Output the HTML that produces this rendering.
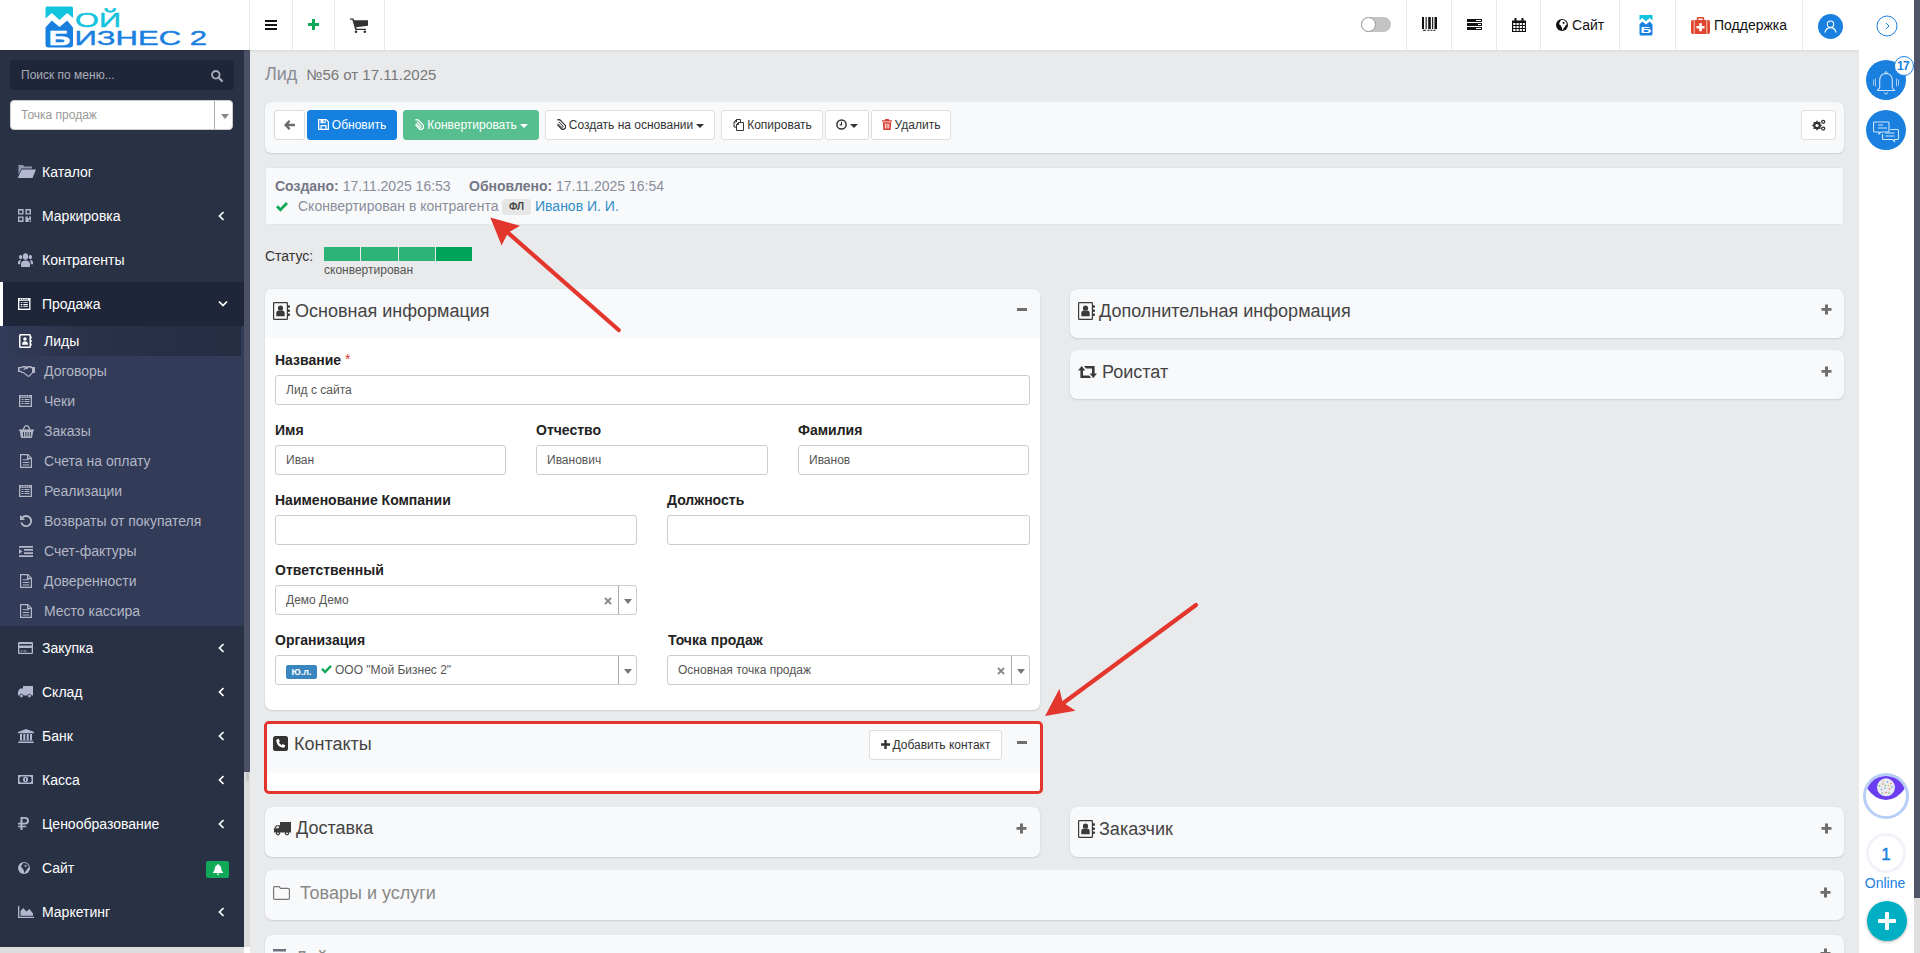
<!DOCTYPE html>
<html lang="ru">
<head>
<meta charset="utf-8">
<title>Лид №56 от 17.11.2025</title>
<style>
*{box-sizing:border-box;margin:0;padding:0}
html,body{width:1920px;height:953px;overflow:hidden}
body{font-family:"Liberation Sans",Arial,sans-serif;font-size:14px;color:#333;background:#e9eaec;position:relative}
.abs{position:absolute}
svg{display:block}
/* ---------- top bar ---------- */
#topbar{position:absolute;left:0;top:0;width:1859px;height:50px;background:#fff;box-shadow:0 1px 2px rgba(0,0,0,.08);z-index:5}
.tsep{position:absolute;top:0;width:1px;height:50px;background:#e9e9eb}
/* ---------- sidebar ---------- */
#sidebar{position:absolute;left:0;top:50px;width:244px;height:897px;background:#293145;overflow:hidden;z-index:4}
#sbtrack{position:absolute;left:244px;top:50px;width:6px;height:897px;background:#dcdcdc;z-index:4}
#sbthumb{position:absolute;left:244px;top:50px;width:6px;height:722px;background:#4b5066;z-index:4}
#sbcorner{position:absolute;left:244px;top:947px;width:6px;height:6px;background:#fff;z-index:4}
#sbmini{position:absolute;left:246px;top:772px;width:3px;height:9px;background:#c6c6c6;border-radius:0 0 2px 2px;z-index:4}
#sbbottom{position:absolute;left:0;top:947px;width:244px;height:6px;background:#dddddd;z-index:4}

/* sidebar content */
#sidebar .search{position:absolute;left:10px;top:10px;width:224px;height:30px;background:#20263a;border-radius:3px;color:#a9acb6;font-size:12px;line-height:30px;padding-left:11px}
#sidebar .sel{position:absolute;left:10px;top:50px;width:223px;height:30px;background:#fff;border-radius:4px;border:1px solid #ccc;color:#999;font-size:12px;line-height:28px;padding-left:10px}
#sidebar .sel i{position:absolute;left:203px;top:0;width:1px;height:28px;background:#aaa}
#sidebar .sel b{position:absolute;left:210px;top:13px;width:0;height:0;border-left:4px solid transparent;border-right:4px solid transparent;border-top:5px solid #888}
.mi{position:absolute;left:0;width:244px;height:44px;color:#fff;font-size:14px;line-height:44px;padding-left:42px;white-space:nowrap}
.mi.act{background:#20263a;border-left:3px solid #fff;padding-left:39px}
.mi svg{position:absolute}
.mi .chev{position:absolute;left:218px;top:17px}
.mi.act .chev{left:215px}
#submenu{position:absolute;left:0;top:276px;width:244px;height:300px;background:#323b58}
.si{position:absolute;left:0;width:241px;height:30px;color:#b3b7c6;font-size:14px;line-height:30px;padding-left:44px;white-space:nowrap}
.si.act{color:#fff;background:linear-gradient(90deg,#323b58 0,#2a3047 40%,#262c42 100%)}
.si svg{position:absolute;left:19px}
/* ---------- right rail ---------- */
#rail{position:absolute;left:1859px;top:0;width:55px;height:953px;background:#fff;z-index:6}
#vtrack{position:absolute;left:1914px;top:0;width:6px;height:953px;background:#e0e0e0;z-index:6}
#vthumb{position:absolute;left:1914px;top:0;width:6px;height:898px;background:#4f5468;z-index:6}
/* ---------- main ---------- */
.panel{position:absolute;background:#f8f9fb;border-radius:6px;box-shadow:0 1px 2px rgba(0,0,0,.11),0 0 1px rgba(0,0,0,.10)}

/* main content */
.btn{position:absolute;top:8px;height:30px;border-radius:3px;border:1px solid #ddd;background:#fff;color:#333;font-size:12px;line-height:28px;white-space:nowrap;text-align:center}
.btn svg{display:inline-block;vertical-align:middle;position:relative;top:-1px}
.btn.blue{background:#1580e0;border-color:#1580e0;color:#fff}
.btn.green{background:#57bf8f;border-color:#57bf8f;color:#fff}
.caret{display:inline-block;width:0;height:0;border-left:4px solid transparent;border-right:4px solid transparent;border-top:4px solid #333;vertical-align:middle;margin-left:3px}
.card{position:absolute;background:#fff;border-radius:7px;box-shadow:0 1px 2px rgba(0,0,0,.11),0 0 1px rgba(0,0,0,.10);overflow:hidden}
.card .hd{position:absolute;left:0;top:0;right:0;background:#f8f9fb}
.card .tt{position:absolute;font-size:18px;line-height:22px;color:#444;white-space:nowrap}
.card svg.ic{position:absolute}
.pm{position:absolute;background:#6e6e6e;border-radius:.5px}
.lbl{position:absolute;font-weight:bold;font-size:14px;line-height:16px;color:#222;white-space:nowrap}
.inp{position:absolute;height:30px;border:1px solid #ccc;border-radius:3px;background:#fff;font-size:12px;line-height:28px;color:#555;padding-left:10px;white-space:nowrap}
.inp .dv{position:absolute;right:17px;top:0;width:1px;height:28px;background:#aaa}
.inp .ar{position:absolute;right:4px;top:13px;width:0;height:0;border-left:4px solid transparent;border-right:4px solid transparent;border-top:5px solid #777}
.inp .x{position:absolute;right:24px;top:11px}
</style>
</head>
<body>

<div id="topbar">
<!-- logo -->
<svg class="abs" style="left:40px;top:2px" width="175" height="48" viewBox="0 0 175 48">
  <path d="M7 4.5h24.5a1.5 1.5 0 0 1 1.500 1.500V16l-5.800-5-7.700 7-7.700-7L5.500 16.500V6A1.500 1.500 0 0 1 7 4.500z" fill="#12c3de"/>
  <path d="M5.500 25.500l6.300-7 7.700 6.500 7.700-6.500 5.800 7V42.500a3 3 0 0 1-3 3H8.500a3 3 0 0 1-3-3z" fill="#1a80e0"/>
  <text x="8.800" y="42.600" font-family="Liberation Sans, sans-serif" font-weight="bold" font-size="19.600" fill="#fff" stroke="#fff" stroke-width=".5" textLength="21.500" lengthAdjust="spacingAndGlyphs">Б</text>
  <text x="35" y="25.300" font-family="Liberation Sans, sans-serif" font-size="19.600" fill="#12c3de" stroke="#12c3de" stroke-width=".4" textLength="46" lengthAdjust="spacingAndGlyphs">ОЙ</text>
  <text x="34.500" y="42.900" font-family="Liberation Sans, sans-serif" font-size="20.400" fill="#1a80e0" stroke="#1a80e0" stroke-width=".4" textLength="132.500" lengthAdjust="spacingAndGlyphs">ИЗНЕС 2</text>
</svg>
<div class="tsep" style="left:249px"></div>
<div class="tsep" style="left:292px"></div>
<div class="tsep" style="left:334px"></div>
<div class="tsep" style="left:384px"></div>
<!-- hamburger -->
<svg class="abs" style="left:265px;top:20px" width="12" height="10" viewBox="0 0 12 10"><path d="M0 0h12v2H0zM0 4h12v2H0zM0 8h12v2H0z" fill="#111"/></svg>
<!-- plus -->
<svg class="abs" style="left:308px;top:19px" width="11" height="11" viewBox="0 0 11 11"><path d="M4 0h3v4h4v3H7v4H4V7H0V4h4z" fill="#0fa958"/></svg>
<!-- cart -->
<svg class="abs" style="left:350px;top:18px" width="18" height="15" viewBox="0 0 18 15"><path d="M0 .4h3.300l.9 1.800H18v5.600L6.300 9.300l.4 1.500H16v1.300H5.300L2.300 1.700H0z" fill="#333"/><circle cx="6" cy="13.700" r="1.300" fill="#333"/><circle cx="14.800" cy="13.700" r="1.300" fill="#333"/></svg>
<!-- toggle -->
<div class="abs" style="left:1361px;top:17px;width:30px;height:15px;border-radius:8px;background:#c4c4c4"></div>
<div class="abs" style="left:1361px;top:17px;width:15px;height:15px;border-radius:50%;background:#fff;border:1px solid #9a9a9a"></div>
<div class="tsep" style="left:1406px"></div>
<div class="tsep" style="left:1451px"></div>
<div class="tsep" style="left:1496px"></div>
<div class="tsep" style="left:1540px"></div>
<div class="tsep" style="left:1619px"></div>
<div class="tsep" style="left:1675px"></div>
<div class="tsep" style="left:1802px"></div>
<!-- barcode -->
<svg class="abs" style="left:1422px;top:17px" width="15" height="14" viewBox="0 0 15 14"><path d="M0 0h2v12H0zM3.600 0h1.100v12H3.600zM6.200 0h2.600v12H6.200zM10.100 0h1.100v12h-1.100zM12.500 0H15v12h-2.500z" fill="#111"/><path d="M1 12.800h3v.9H1zM5.500 12.800h2v.9h-2zM8.500 12.800h2v.9h-2zM11.500 12.800h2v.9h-2z" fill="#111"/></svg>
<!-- server -->
<svg class="abs" style="left:1467px;top:19px" width="15" height="11" viewBox="0 0 15 11"><path d="M0 0h15v3H0zM0 4h15v3H0zM0 8h15v3H0z" fill="#111"/><path d="M9 1h5v1H9zM11 5h3v1h-3zM9 9h5v1H9z" fill="#fff"/></svg>
<!-- calendar -->
<svg class="abs" style="left:1512px;top:18px" width="14" height="14" viewBox="0 0 14 14"><path d="M0 2.500h14V14H0z" fill="#111"/><path d="M2.500 0h2v4h-2zM9.500 0h2v4h-2z" fill="#111"/><path d="M1.200 5h2.300v2H1.200zM4.500 5h2.200v2H4.500zM7.700 5h2.200v2H7.700zM10.900 5h2v2h-2zM1.200 8h2.300v2H1.200zM4.500 8h2.200v2H4.500zM7.700 8h2.200v2H7.700zM10.900 8h2v2h-2zM1.200 11h2.300v2H1.200zM4.500 11h2.200v2H4.500zM7.700 11h2.200v2H7.700zM10.900 11h2v2h-2z" fill="#fff"/></svg>
<!-- globe + Сайт -->
<svg class="abs" style="left:1556px;top:19px" width="12" height="12" viewBox="0 0 12 12"><circle cx="6" cy="6" r="6" fill="#111"/><path d="M5.200 1.100L7.300 .9l1.900 1 1.300 1.800.3 2-1 .4-.9 1.700-1.300 1.400-.8 1.700-.7-.3-.1-2.100-.9-.7-.2-1.300-1.300-.7-.4-1.300.6-1.600z" fill="#fff"/><path d="M6.800 2.800l1.600.4.300 1.200-1.300.5-.9-.9z" fill="#111"/></svg>
<div class="abs" style="left:1572px;top:17px;font-size:14px;line-height:16px;color:#111">Сайт</div>
<!-- mini logo -->
<svg class="abs" style="left:1639px;top:15px" width="14" height="21" viewBox="0 0 14 21"><path d="M.5 0h13v5.500L10.800 3 7 6.200 3.200 3 .5 5.500z" fill="#12c3de"/><path d="M.5 9.500L3.200 6.500 7 9.500l3.800-3 2.700 3V19a1.500 1.500 0 0 1-1.500 1.500H2A1.500 1.500 0 0 1 .5 19z" fill="#1a80e0"/><text x="1.600" y="17.700" font-family="Liberation Sans, sans-serif" font-weight="bold" font-size="8.600" fill="#fff" textLength="10.800" lengthAdjust="spacingAndGlyphs">Б</text></svg>
<!-- medkit + Поддержка -->
<svg class="abs" style="left:1691px;top:17px" width="19" height="17" viewBox="0 0 19 17"><path d="M5.800 3.200V1.300Q5.800 0 7.100 0h4.800q1.300 0 1.300 1.300v1.900h-1.500V1.500H7.300v1.700z" fill="#e0452f"/><path d="M1.800 3h1v14h-1Q0 17 0 15.200V4.800Q0 3 1.800 3zM16.200 3h1Q19 3 19 4.800v10.400Q19 17 17.200 17h-1z" fill="#e0452f"/><rect x="3.500" y="3" width="12" height="14" fill="#e0452f"/><path d="M8.200 6.300h2.600V9h2.700v2.600h-2.700v2.700H8.200v-2.700H5.500V9h2.700z" fill="#fff"/></svg>
<div class="abs" style="left:1714px;top:17px;font-size:14px;line-height:16px;color:#111">Поддержка</div>
<!-- avatar -->
<div class="abs" style="left:1818px;top:14px;width:25px;height:25px;border-radius:50%;background:#1a80e0"></div>
<svg class="abs" style="left:1824px;top:20px" width="13" height="13" viewBox="0 0 13 13"><circle cx="6.500" cy="4.200" r="3.200" fill="none" stroke="#fff" stroke-width="1.100"/><path d="M.8 12.500C1.800 9 4 7.600 6.500 7.600S11.200 9 12.200 12.500" fill="none" stroke="#fff" stroke-width="1.100"/></svg>
</div>
<div id="sidebar">
<div class="search">Поиск по меню...<svg class="abs" style="left:201px;top:10px" width="12" height="12" viewBox="0 0 12 12"><circle cx="4.800" cy="4.800" r="3.800" fill="none" stroke="#a9acb6" stroke-width="1.800"/><path d="M7.500 7.500L11 11" stroke="#a9acb6" stroke-width="2.200" stroke-linecap="round"/></svg></div>
<div class="sel">Точка продаж<i></i><b></b></div>
<div class="mi" style="top:100px"><svg style="left:17px;top:15px" width="19" height="13" viewBox="0 0 19 13"><path d="M1 0h5l1.500 1.500H15V3.500H4.500L1.500 10V1z" fill="#b4b7d0" opacity=".75"/><path d="M4.800 4.500H19L15.500 13H.8z" fill="#b4b7d0"/></svg>Каталог</div>
<div class="mi" style="top:144px"><svg style="left:18px;top:15px" width="13" height="13" viewBox="0 0 14 14"><path d="M0 0h6v6H0zM1.500 1.500v3h3v-3zM8 0h6v6H8zM9.500 1.500v3h3v-3zM0 8h6v6H0zM1.500 9.500v3h3v-3zM8 8h2.500v2H12V8h2v3.500h-2.500v2.500H8zM12.500 12.500H14V14h-1.500z" fill="#b4b7d0" fill-rule="evenodd"/></svg>Маркировка<svg class="chev" width="7" height="10" viewBox="0 0 7 10"><path d="M5.500 1L1.500 5l4 4" fill="none" stroke="#fff" stroke-width="1.700"/></svg></div>
<div class="mi" style="top:188px"><svg style="left:18px;top:15px" width="15" height="14" viewBox="0 0 17 13" preserveAspectRatio="none"><circle cx="8.500" cy="3.200" r="3" fill="#b4b7d0"/><path d="M3.500 13v-2.500Q3.500 7 8.500 7t5 3.500V13z" fill="#b4b7d0"/><circle cx="3" cy="3.800" r="2" fill="#b4b7d0"/><circle cx="14" cy="3.800" r="2" fill="#b4b7d0"/><path d="M0 10.500V9Q0 6.500 3.300 6.500 2.500 8 2.500 10.500zM17 10.500V9q0-2.500-3.300-2.500.8 1.500.8 4z" fill="#b4b7d0"/></svg>Контрагенты</div>
<div class="mi act" style="top:232px"><svg style="left:15px;top:16px" width="12.500" height="12" viewBox="0 0 14 13" preserveAspectRatio="none"><path d="M0 0h14v13H0z" fill="#fff"/><path d="M1.500 3h11v8.500h-11z" fill="#20263a"/><path d="M2 .8h1.500v1.200H2zM4.500 .8H6v1.200H4.500zM7 .8h1.500v1.200H7zM9.500 .8H11v1.200H9.500z" fill="#20263a"/><path d="M3 4.500h2v1H3zM6 4.500h5v1H6zM3 6.500h2v1H3zM6 6.500h5v1H6zM3 8.500h2v1H3zM6 8.500h5v1H6z" fill="#fff"/></svg>Продажа<svg class="chev" width="10" height="7" viewBox="0 0 10 7" style="top:18px"><path d="M1 1.500l4 4 4-4" fill="none" stroke="#fff" stroke-width="1.700"/></svg></div>
<div id="submenu">
<div class="si act" style="top:0px"><svg style="top:8px" width="13" height="14" viewBox="0 0 13 14"><path d="M1.500 0h9Q12 0 12 1.500v11q0 1.500-1.500 1.500h-9Q0 14 0 12.500v-11Q0 0 1.500 0zM1.500 1.500v11h9v-11zM6 3.200a1.800 1.800 0 1 1 0 3.600 1.800 1.800 0 0 1 0-3.600zM3 10.800Q3 7.300 6 7.300t3 3.500zM12.300 2.500h.7v2h-.7zM12.300 6h.7v2h-.7zM12.300 9.500h.7v2h-.7z" fill="#fff" fill-rule="evenodd"/></svg>Лиды</div>
<div class="si" style="top:30px"><svg style="top:10px;left:18px" width="17" height="11" viewBox="0 0 17 11"><path d="M0 1h3l2-1h3l1 .8L10.500 0H13l1.500 1H17v6h-2l-3.500 3.500Q10.500 11 9.500 10.500L5 7H3.500L2.500 6H0zM1.500 2.300v2.500h1.700l1.300 1.300h1L10 9.400l.8.100L14 6.500V2.300h-1.500L12.600 1.500H11L8.800 3.300 7.500 3 6 4.300Q5 4 5.500 3.200L7.300 1.500H5.400L3.400 2.300z" fill="#b3b7c6" fill-rule="evenodd"/></svg>Договоры</div>
<div class="si" style="top:60px"><svg style="top:9px" width="13" height="12" viewBox="0 0 13 12"><path d="M0 0h13v12H0zM1.300 2.800v8h10.400v-8zM1.800 .8h1.400v1H1.800zM4.200 .8h1.400v1H4.200zM6.600 .8H8v1H6.600zM9 .8h1.400v1H9zM2.500 4h2v1h-2zM5.500 4h5v1h-5zM2.500 6h2v1h-2zM5.500 6h5v1h-5zM2.500 8h2v1h-2zM5.500 8h5v1h-5z" fill="#b3b7c6" fill-rule="evenodd"/></svg>Чеки</div>
<div class="si" style="top:90px"><svg style="top:9px" width="15" height="13" viewBox="0 0 15 13"><path d="M3.500 4.500L5 1.500Q5.500 0 7.500 0T10 1.500l1.500 3H15V6h-.8l-1 6Q13 13 12 13H3q-1 0-1.200-1l-1-6H0V4.500zM5 4.500h5L8.800 2Q8.500 1.300 7.500 1.300T6.200 2zM4 7v4.500h1V7zM6.300 7v4.500h1V7zM8.600 7v4.500h1V7zM10.900 7v4.500h1V7z" fill="#b3b7c6" fill-rule="evenodd"/></svg>Заказы</div>
<div class="si" style="top:120px"><svg style="top:8px;left:20px" width="12" height="14" viewBox="0 0 12 14"><path d="M0 0h8l4 4v10H0zM1.200 1.200v11.600h9.600V5H7V1.200zM8.200 1.700V3.800h2.100zM2.800 5.300h6.400v1H2.800zM2.800 7.900h6.400v1H2.800zM2.800 10.500h6.400v1H2.800z" fill="#b3b7c6" fill-rule="evenodd"/></svg>Счета на оплату</div>
<div class="si" style="top:150px"><svg style="top:9px" width="13" height="12" viewBox="0 0 13 12"><path d="M0 0h13v12H0zM1.300 2.800v8h10.400v-8zM1.800 .8h1.400v1H1.800zM4.200 .8h1.400v1H4.200zM6.600 .8H8v1H6.600zM9 .8h1.400v1H9zM2.500 4h2v1h-2zM5.500 4h5v1h-5zM2.500 6h2v1h-2zM5.500 6h5v1h-5zM2.500 8h2v1h-2zM5.500 8h5v1h-5z" fill="#b3b7c6" fill-rule="evenodd"/></svg>Реализации</div>
<div class="si" style="top:180px"><svg style="top:9px;left:20px" width="12" height="12" viewBox="0 0 12 12"><path d="M0 0l1.800 1.800A6 6 0 1 1 .3 7.500h2A4.100 4.100 0 1 0 3.200 3.200L5 5H0z" fill="#b3b7c6"/></svg>Возвраты от покупателя</div>
<div class="si" style="top:210px"><svg style="top:10px" width="14" height="11" viewBox="0 0 14 11"><path d="M0 0h14v1.800H0zM5 3h9v1.800H5zM5 6.200h9V8H5zM0 9.200h14V11H0zM0 3l3.500 2.500L0 8z" fill="#b3b7c6"/></svg>Счет-фактуры</div>
<div class="si" style="top:240px"><svg style="top:8px;left:20px" width="12" height="14" viewBox="0 0 12 14"><path d="M0 0h8l4 4v10H0zM1.200 1.200v11.600h9.600V5H7V1.200zM8.200 1.700V3.800h2.100zM2.800 5.300h6.400v1H2.800zM2.800 7.900h6.400v1H2.800zM2.800 10.500h6.400v1H2.800z" fill="#b3b7c6" fill-rule="evenodd"/></svg>Доверенности</div>
<div class="si" style="top:270px"><svg style="top:8px;left:20px" width="12" height="14" viewBox="0 0 12 14"><path d="M0 0h8l4 4v10H0zM1.200 1.200v11.600h9.600V5H7V1.200zM8.200 1.700V3.800h2.100zM2.800 5.300h6.400v1H2.800zM2.800 7.900h6.400v1H2.800zM2.800 10.500h6.400v1H2.800z" fill="#b3b7c6" fill-rule="evenodd"/></svg>Место кассира</div>
</div>
<div class="mi" style="top:576px"><svg style="left:18px;top:16px" width="15" height="12" viewBox="0 0 15 12"><path d="M1.200 0h12.600Q15 0 15 1.200v9.600q0 1.200-1.200 1.200H1.200Q0 12 0 10.800V1.200Q0 0 1.200 0zM1.300 2v1.500h12.400V2zM1.300 6v4.700h12.400V6zM2.500 8.500h2v1h-2zM5.500 8.500h3v1h-3z" fill="#b4b7d0" fill-rule="evenodd"/></svg>Закупка<svg class="chev" width="7" height="10" viewBox="0 0 7 10"><path d="M5.500 1L1.500 5l4 4" fill="none" stroke="#fff" stroke-width="1.700"/></svg></div>
<div class="mi" style="top:620px"><svg style="left:18px;top:16px" width="15" height="12" viewBox="0 0 15 12"><path d="M5 0h10v9.500H5z" fill="#b4b7d0"/><path d="M0 5.500L2 2.500h3v7H0z" fill="#b4b7d0"/><circle cx="3.500" cy="10" r="1.800" fill="#b4b7d0" stroke="#293145" stroke-width=".8"/><circle cx="11.500" cy="10" r="1.800" fill="#b4b7d0" stroke="#293145" stroke-width=".8"/></svg>Склад<svg class="chev" width="7" height="10" viewBox="0 0 7 10"><path d="M5.500 1L1.500 5l4 4" fill="none" stroke="#fff" stroke-width="1.700"/></svg></div>
<div class="mi" style="top:664px"><svg style="left:18px;top:15px" width="16" height="14" viewBox="0 0 16 14"><path d="M8 0l8 3v1.200H0V3zM2 5h2v6H2zM5.300 5h2v6h-2zM8.700 5h2v6h-2zM12 5h2v6h-2zM1 11.500h14v1H1zM0 13h16v1H0z" fill="#b4b7d0"/></svg>Банк<svg class="chev" width="7" height="10" viewBox="0 0 7 10"><path d="M5.500 1L1.500 5l4 4" fill="none" stroke="#fff" stroke-width="1.700"/></svg></div>
<div class="mi" style="top:708px"><svg style="left:18px;top:17px" width="15" height="9" viewBox="0 0 15 9"><path d="M0 0h15v9H0zM2.500 1.500Q2.500 2.500 1.500 2.500v4q1 0 1 1h10q0-1 1-1v-4q-1 0-1-1z" fill="#b4b7d0" fill-rule="evenodd"/><ellipse cx="7.500" cy="4.500" rx="2.500" ry="2.800" fill="#b4b7d0"/><path d="M7 3h1v3H7z" fill="#293145"/></svg>Касса<svg class="chev" width="7" height="10" viewBox="0 0 7 10"><path d="M5.500 1L1.500 5l4 4" fill="none" stroke="#fff" stroke-width="1.700"/></svg></div>
<div class="mi" style="top:752px"><svg style="left:18px;top:15px" width="11" height="13" viewBox="0 0 11 13"><path d="M2.500 0h4.300Q11 0 11 3.700T6.800 7.400H4.500v1.300h3.800v1.500H4.500V13h-2v-2.800H0V8.700h2.500V7.400H0V5.700h2.500zM4.500 1.700v4h2.200Q9 5.700 9 3.700t-2.300-2z" fill="#b4b7d0" fill-rule="evenodd"/></svg>Ценообразование<svg class="chev" width="7" height="10" viewBox="0 0 7 10"><path d="M5.500 1L1.500 5l4 4" fill="none" stroke="#fff" stroke-width="1.700"/></svg></div>
<div class="mi" style="top:796px"><svg style="left:18px;top:16px" width="12" height="12" viewBox="0 0 12 12"><circle cx="6" cy="6" r="6" fill="#b4b7d0"/><path d="M5.200 1.100L7.300 .9l1.900 1 1.300 1.800.3 2-1 .4-.9 1.700-1.300 1.400-.8 1.700-.7-.3-.1-2.100-.9-.7-.2-1.300-1.300-.7-.4-1.300.6-1.600z" fill="#293145"/><path d="M6.800 2.800l1.600.4.300 1.200-1.300.5-.9-.9z" fill="#b4b7d0"/></svg>Сайт<div class="abs" style="left:206px;top:15px;width:23px;height:17px;border-radius:2px;background:#0fa958"><svg class="abs" style="left:7px;top:3px" width="10" height="11" viewBox="0 0 10 11"><path d="M5 0Q5.800 0 5.800 .9 8.300 1.600 8.300 4.500q0 2.500 1.700 3.800v.7H0v-.7Q1.700 7 1.700 4.500 1.700 1.600 4.200 .9 4.200 0 5 0zM3.800 9.700h2.400Q6 11 5 11T3.800 9.700z" fill="#fff"/></svg></div></div>
<div class="mi" style="top:840px"><svg style="left:18px;top:16px" width="16" height="12" viewBox="0 0 16 12"><path d="M0 0h1.300v10.700H16V12H0z" fill="#b4b7d0"/><path d="M2.500 9.700V5l2.800-3 3 3.500 3.200-2.500 3.500 4.500v2.200z" fill="#b4b7d0"/></svg>Маркетинг<svg class="chev" width="7" height="10" viewBox="0 0 7 10"><path d="M5.500 1L1.500 5l4 4" fill="none" stroke="#fff" stroke-width="1.700"/></svg></div>
</div>
<div id="sbtrack"></div><div id="sbthumb"></div><div id="sbmini"></div><div id="sbbottom"></div><div id="sbcorner"></div>
<div id="rail">
<svg class="abs" style="left:17px;top:15px" width="22" height="22" viewBox="0 0 22 22"><circle cx="11" cy="11" r="10" fill="#fff" stroke="#1a80e0" stroke-width="1"/><path d="M9.800 7.800L13 11l-3.200 3.200" fill="none" stroke="#1a80e0" stroke-width="1"/></svg>
<!-- bell -->
<div class="abs" style="left:7px;top:60px;width:40px;height:40px;border-radius:50%;background:#1a80e0"></div>
<svg class="abs" style="left:13px;top:70.500px" width="28" height="25" viewBox="0 0 28 25"><path d="M14 2.500c-4.200 0-6.300 3-6.300 7.500v6.500L5.500 19.500h17L20.300 16.500V10c0-4.500-2.100-7.500-6.300-7.500z" fill="none" stroke="#cfe4fb" stroke-width="1.100"/><circle cx="14" cy="1.800" r="1.100" fill="none" stroke="#cfe4fb" stroke-width=".9"/><path d="M12.300 21.300a1.700 1.700 0 0 0 3.400 0" fill="none" stroke="#cfe4fb" stroke-width=".9"/><path d="M1.500 8.500v6M3.500 7.500v8M26.500 8.500v6M24.500 7.500v8" stroke="#cfe4fb" stroke-width=".9" opacity=".85"/></svg>
<div class="abs" style="left:34.500px;top:55.500px;width:20px;height:20px;border-radius:50%;background:#fff;border:1px solid #1a80e0;color:#1a80e0;font-size:12px;font-weight:bold;line-height:19px;text-align:center;letter-spacing:-.6px;text-indent:-1px">17</div>
<!-- chat -->
<div class="abs" style="left:7px;top:110px;width:40px;height:40px;border-radius:50%;background:#1a80e0"></div>
<svg class="abs" style="left:14px;top:120.500px" width="27" height="23" viewBox="0 0 27 23"><path d="M1.500 1h13.500q1 0 1 1v8q0 1-1 1H8l-2 2v-2H1.500q-1 0-1-1V2q0-1 1-1z" fill="none" stroke="#cfe4fb" stroke-width="1.100"/><path d="M5 4h5M5 7h9" stroke="#cfe4fb" stroke-width="1"/><path d="M17.500 8.500h7q1 0 1 1v8q0 1-1 1h-3v2l-2-2h-9q-1 0-1-1v-4.500" fill="none" stroke="#cfe4fb" stroke-width="1.100"/><path d="M12.500 12h9M12.500 15h9" stroke="#cfe4fb" stroke-width="1"/></svg>
<!-- eye -->
<div class="abs" style="left:4px;top:773px;width:46px;height:46px;border-radius:50%;background:#fff;border:3px solid #b7cef6;overflow:hidden"><svg class="abs" style="left:0;top:-1px" width="40" height="26" viewBox="0 0 40 26"><path d="M0 12Q5 0 20 0T40 12Q31 25 20 25T0 12z" fill="#6a3df0"/><circle cx="20" cy="12.300" r="9" fill="#e9e9ee"/><g fill="#e8734a"><circle cx="17" cy="9" r=".8"/><circle cx="23.500" cy="14" r=".8"/><circle cx="20" cy="17.500" r=".8"/><circle cx="25" cy="8.500" r=".7"/></g><g fill="#4aa3e8"><circle cx="21.500" cy="7" r=".8"/><circle cx="15.500" cy="14.500" r=".8"/><circle cx="26" cy="12" r=".8"/><circle cx="19" cy="13" r=".7"/></g><g fill="#5cb85c"><circle cx="19.500" cy="10.500" r=".8"/><circle cx="13.500" cy="11" r=".8"/><circle cx="23" cy="18" r=".7"/><circle cx="16.500" cy="18" r=".7"/></g><g fill="#e8b84a"><circle cx="22.500" cy="10.500" r=".7"/><circle cx="17.500" cy="6" r=".7"/></g></svg></div>
<!-- online -->
<div class="abs" style="left:7px;top:833px;width:40px;height:40px;border-radius:50%;background:#fff;border:3px solid #f1f3f9;color:#1a80e0;font-size:17px;line-height:38px;text-align:center;-webkit-text-stroke:.4px #1a80e0">1</div>
<div class="abs" style="left:0;top:875px;width:52px;text-align:center;color:#1a80e0;font-size:14px;line-height:16px">Online</div>
<!-- plus -->
<div class="abs" style="left:8px;top:901px;width:40px;height:40px;border-radius:50%;background:#00afc4;box-shadow:0 1px 3px rgba(0,0,0,.3)"></div>
<div class="abs" style="left:19px;top:919px;width:18px;height:4px;border-radius:1px;background:#fff"></div>
<div class="abs" style="left:26px;top:912px;width:4px;height:18px;border-radius:1px;background:#fff"></div>
</div>
<div id="vtrack"></div><div id="vthumb"></div>

<div id="main">
<div class="abs" style="left:265px;top:63px;font-size:18px;line-height:22px;color:#8a8d96;white-space:nowrap">Лид <span style="font-size:15px;color:#777;margin-left:4px">№56 от 17.11.2025</span></div>
<div class="panel" style="left:265px;top:102px;width:1579px;height:51px">
<div class="btn" style="left:8.500px;width:31px"><svg width="11" height="10" viewBox="0 0 11 10"><path d="M4.800 0L6.500 1.600 4.400 3.700H11v2.600H4.400L6.500 8.400 4.800 10 0 5z" fill="#6b6b6b"/></svg></div>
<div class="btn blue" style="left:42px;width:90px"><svg width="11" height="11" viewBox="0 0 11 11" style="margin-right:3px"><path d="M0 0h8.500L11 2.500V11H0zM1.300 1.300v8.400h1.200V6h6v3.700h1.200V3L8 1.300H7.700v2.900H2.500V1.300zM5.500 1.300v1.900h1.200V1.300zM3.700 7.200v2.500h3.600V7.200z" fill="#fff" fill-rule="evenodd"/></svg>Обновить</div>
<div class="btn green" style="left:138px;width:136px"><svg width="10" height="11" viewBox="0 0 10 11" style="margin-right:3px"><path d="M1.500 1.200a2 2 0 0 1 2.800 0l4.500 4.600a2.600 2.600 0 0 1-3.700 3.700L1.300 5.600" fill="none" stroke="#fff" stroke-width="1.300"/><path d="M3 3l3.800 3.900a.9.900 0 0 1-1.300 1.300L2 4.600" fill="none" stroke="#fff" stroke-width="1.100"/></svg>Конвертировать<span class="caret" style="border-top-color:#fff"></span></div>
<div class="btn" style="left:280px;width:170px"><svg width="10" height="11" viewBox="0 0 10 11" style="margin-right:3px"><path d="M1.500 1.200a2 2 0 0 1 2.800 0l4.500 4.600a2.600 2.600 0 0 1-3.700 3.700L1.300 5.600" fill="none" stroke="#333" stroke-width="1.200"/><path d="M3 3l3.800 3.900a.9.900 0 0 1-1.300 1.300L2 4.600" fill="none" stroke="#333" stroke-width="1"/></svg>Создать на основании<span class="caret"></span></div>
<div class="btn" style="left:456px;width:102px"><svg width="12" height="12" viewBox="0 0 12 12" style="margin-right:3px"><path d="M4.500 .5h4l0 0v2.500M4.500 .5L2 3h2.500zM2 3v5h2.500" fill="none" stroke="#333" stroke-width="1"/><path d="M6.500 3.500h5v8h-7v-6zM6.500 3.500v2h-2" fill="none" stroke="#333" stroke-width="1"/></svg>Копировать</div>
<div class="btn" style="left:560px;width:44px"><svg width="11" height="11" viewBox="0 0 11 11"><circle cx="5.500" cy="5.500" r="4.600" fill="none" stroke="#333" stroke-width="1.500"/><path d="M5.500 2.800v3H3.600" fill="none" stroke="#333" stroke-width="1.200"/></svg><span class="caret"></span></div>
<div class="btn" style="left:606px;width:80px"><svg width="10" height="11" viewBox="0 0 10 11" style="margin-right:3px"><path d="M3.300 0h3.400l.6 1.200H10v1.300H0V1.200h2.700zM.8 3.200h8.400L8.700 11H1.300zM2.800 4.500v5h.9v-5zM4.600 4.500v5h.9v-5zM6.400 4.500v5h.9v-5z" fill="#dc3d33" fill-rule="evenodd"/></svg>Удалить</div>
<div class="btn" style="left:1536px;width:35px"><svg width="14" height="12" viewBox="0 0 14 12"><circle cx="5" cy="6.500" r="2.700" fill="none" stroke="#333" stroke-width="2.200"/><path d="M5 1.800v9.400M.3 6.500h9.400M1.700 3.200l6.600 6.600M8.300 3.200L1.700 9.800" stroke="#333" stroke-width="1.500"/><circle cx="5" cy="6.500" r="1.600" fill="#fff"/><circle cx="11.200" cy="2.800" r="1.500" fill="none" stroke="#333" stroke-width="1.300"/><circle cx="11.200" cy="9.600" r="1.500" fill="none" stroke="#333" stroke-width="1.300"/></svg></div>
</div>
<div class="panel" style="left:265px;top:167px;width:1579px;height:58px;font-size:14px;color:#8a8d9a;white-space:nowrap;border-radius:3px;box-shadow:none;outline:1px solid #e3e4e7;outline-offset:-1px">
<div class="abs" style="left:10px;top:10px;line-height:18px"><b style="color:#747786">Создано:</b> 17.11.2025 16:53</div>
<div class="abs" style="left:204px;top:10px;line-height:18px"><b style="color:#747786">Обновлено:</b> 17.11.2025 16:54</div>
<svg class="abs" style="left:11px;top:35px" width="12" height="10" viewBox="0 0 12 10"><path d="M0 5.300l2-2 2.450 2.450L10 0l2 2-7.550 7.750z" fill="#0fa958"/></svg>
<div class="abs" style="left:33px;top:30px;line-height:18px">Сконвертирован в контрагента</div>
<div class="abs" style="left:237px;top:32px;width:29px;height:16px;border-radius:3px;background:#e6e6e6;color:#444;font-size:10px;font-weight:bold;line-height:16px;text-align:center">ФЛ</div>
<div class="abs" style="left:270px;top:30px;line-height:18px;color:#2f8dc9">Иванов И. И.</div>
</div>
<div class="abs" style="left:265px;top:248px;font-size:14px;line-height:16px;color:#333">Статус:</div>
<div class="abs" style="left:324px;top:247px;width:36px;height:14px;background:#2eb377"></div>
<div class="abs" style="left:361px;top:247px;width:37px;height:14px;background:#2eb377"></div>
<div class="abs" style="left:399px;top:247px;width:36px;height:14px;background:#2eb377"></div>
<div class="abs" style="left:436px;top:247px;width:36px;height:14px;background:#00a35a"></div>
<div class="abs" style="left:324px;top:263px;font-size:12px;line-height:14px;color:#555">сконвертирован</div>
<div class="card" style="left:265px;top:289px;width:775px;height:421px">
<div class="hd" style="height:49px"></div><div class="abs" style="left:0;top:1px;width:775px;height:420px">
<svg class="ic" style="left:8px;top:12px" width="17" height="18" viewBox="0 0 17 18"><path d="M1.200 0h12.600Q15 0 15 1.200v15.600Q15 18 13.800 18H1.200Q0 18 0 16.800V1.200Q0 0 1.200 0zM1.200 1.300v15.400h12.600V1.300zM7.500 3.600a2.600 2.600 0 1 1 0 5.200 2.600 2.600 0 0 1 0-5.200zM3.300 14.300V11.200Q3.300 8.500 6 8.500h3q2.700 0 2.700 2.700v3.100zM15 3.300h1.200q.8 0 .8.800v.9q0 .8-.8.800H15zM15 7.400h1.200q.8 0 .8.800v.9q0 .8-.8.800H15zM15 11.400h1.200q.8 0 .8.800v.9q0 .8-.8.800H15z" fill="#3a3a3a" fill-rule="evenodd"/></svg><div class="tt" style="left:30px;top:10px">Основная информация</div>
<div class="pm" style="left:752px;top:18px;width:10px;height:3px"></div>
<div class="lbl" style="left:10px;top:62px">Название <span style="color:#dc3d33;font-weight:normal;position:relative;top:-1px">*</span></div>
<div class="inp" style="left:10px;top:85px;width:755px">Лид с сайта</div>
<div class="lbl" style="left:10px;top:132px">Имя</div>
<div class="inp" style="left:10px;top:155px;width:231px">Иван</div>
<div class="lbl" style="left:271px;top:132px">Отчество</div>
<div class="inp" style="left:271px;top:155px;width:232px">Иванович</div>
<div class="lbl" style="left:533px;top:132px">Фамилия</div>
<div class="inp" style="left:533px;top:155px;width:231px">Иванов</div>
<div class="lbl" style="left:10px;top:202px">Наименование Компании</div>
<div class="inp" style="left:10px;top:225px;width:362px"></div>
<div class="lbl" style="left:402px;top:202px">Должность</div>
<div class="inp" style="left:402px;top:225px;width:363px"></div>
<div class="lbl" style="left:10px;top:272px">Ответственный</div>
<div class="inp" style="left:10px;top:295px;width:362px">Демо Демо<svg class="x" width="8" height="8" viewBox="0 0 8 8"><path d="M1 1l6 6M7 1L1 7" stroke="#888" stroke-width="1.800"/></svg><div class="dv"></div><div class="ar"></div></div>
<div class="lbl" style="left:10px;top:342px">Организация</div>
<div class="inp" style="left:10px;top:365px;width:362px"><span style="display:inline-block;background:#3a87c0;color:#fff;font-size:9px;font-weight:bold;line-height:14px;padding:0 5.5px;border-radius:2px;vertical-align:middle;margin-right:4px;position:relative;top:1px">Ю.л.</span><svg width="11" height="9" viewBox="0 0 12 10" style="display:inline-block;vertical-align:middle;margin-right:3px;position:relative;top:-1px"><path d="M0 5.300l2-2 2.450 2.450L10 0l2 2-7.550 7.750z" fill="#0fa958"/></svg>ООО "Мой Бизнес 2"<div class="dv"></div><div class="ar"></div></div>
<div class="lbl" style="left:403px;top:342px">Точка продаж</div>
<div class="inp" style="left:402px;top:365px;width:363px">Основная точка продаж<svg class="x" width="8" height="8" viewBox="0 0 8 8"><path d="M1 1l6 6M7 1L1 7" stroke="#888" stroke-width="1.800"/></svg><div class="dv"></div><div class="ar"></div></div>
</div></div>

<div class="card" style="left:1070px;top:289px;width:774px;height:49px;background:#f8f9fb">
<svg class="ic" style="left:8px;top:13px" width="17" height="18" viewBox="0 0 17 18"><path d="M1.200 0h12.600Q15 0 15 1.200v15.600Q15 18 13.800 18H1.200Q0 18 0 16.800V1.200Q0 0 1.200 0zM1.200 1.300v15.400h12.600V1.300zM7.500 3.600a2.600 2.600 0 1 1 0 5.200 2.600 2.600 0 0 1 0-5.200zM3.300 14.300V11.200Q3.300 8.500 6 8.500h3q2.700 0 2.700 2.700v3.100zM15 3.300h1.200q.8 0 .8.800v.9q0 .8-.8.800H15zM15 7.400h1.200q.8 0 .8.800v.9q0 .8-.8.800H15zM15 11.400h1.200q.8 0 .8.800v.9q0 .8-.8.800H15z" fill="#3a3a3a" fill-rule="evenodd"/></svg><div class="tt" style="left:29px;top:11px">Дополнительная информация</div>
<svg class="ic" style="left:751px;top:15px" width="11" height="11" viewBox="0 0 11 11"><path d="M4 .5h3v3.500h3.500v2.800H7v3.700H4V6.800H.5V4H4z" fill="#6e6e6e"/></svg>
</div>
<div class="card" style="left:1070px;top:350px;width:774px;height:49px;background:#f8f9fb">
<svg class="ic" style="left:8px;top:16px" width="19" height="12" viewBox="0 0 19 12"><path d="M3.700 0L7.400 4.500H5V9.500h6.200l2 2.500H2.400V4.500H0zM6 0h10.600v7.500H19l-3.700 4.500-3.700-4.500H14V2.500H8z" fill="#3a3a3a"/></svg>
<div class="tt" style="left:32px;top:11px">Роистат</div>
<svg class="ic" style="left:751px;top:16px" width="11" height="11" viewBox="0 0 11 11"><path d="M4 .5h3v3.500h3.500v2.800H7v3.700H4V6.800H.5V4H4z" fill="#6e6e6e"/></svg>
</div>

<div class="card" style="left:264px;top:721px;width:778.600px;height:73px;background:#fff;border:3px solid #e3352c;border-radius:5px;box-shadow:none">
<div class="hd" style="height:49px"></div>
<svg class="ic" style="left:6px;top:12px" width="15" height="15" viewBox="0 0 15 15"><rect width="15" height="15" rx="2.500" fill="#333"/><path d="M4.200 3.200l1.500-.4 1.200 2.600-1.100.9Q6.600 8 8.600 9.200l1-1.100 2.600 1.200-.4 1.500q-.4 1-1.500 1Q4.400 11 3.200 4.700q0-1.100 1-1.500z" fill="#fff"/></svg>
<div class="tt" style="left:27px;top:9px">Контакты</div>
<div class="btn" style="left:602px;top:6px;width:133px"><svg width="9" height="9" viewBox="0 0 9 9" style="margin-right:3px"><path d="M3.300 0h2.400v3.300H9v2.400H5.700V9H3.300V5.700H0V3.300h3.300z" fill="#333"/></svg>Добавить контакт</div>
<div class="pm" style="left:750px;top:17px;width:10px;height:3px"></div>
</div>

<div class="card" style="left:265px;top:807px;width:775px;height:50px;background:#f8f9fb">
<svg class="ic" style="left:9px;top:15px" width="17" height="14" viewBox="0 0 17 14"><path d="M6 0h11v10.500H6z" fill="#3a3a3a"/><path d="M0 6.500L2.300 3.200H6v7.300H0z" fill="#3a3a3a"/><circle cx="4" cy="11.300" r="2.100" fill="#3a3a3a"/><circle cx="4" cy="11.300" r=".9" fill="#f8f9fb"/><circle cx="13" cy="11.300" r="2.100" fill="#3a3a3a"/><circle cx="13" cy="11.300" r=".9" fill="#f8f9fb"/><path d="M1.500 6.200L3 4.300h1.800v1.900z" fill="#f8f9fb"/></svg>
<div class="tt" style="left:31px;top:10px">Доставка</div>
<svg class="ic" style="left:751px;top:16px" width="11" height="11" viewBox="0 0 11 11"><path d="M4 .5h3v3.500h3.500v2.800H7v3.700H4V6.800H.5V4H4z" fill="#6e6e6e"/></svg>
</div>
<div class="card" style="left:1070px;top:807px;width:774px;height:50px;background:#f8f9fb">
<svg class="ic" style="left:8px;top:13px" width="17" height="18" viewBox="0 0 17 18"><path d="M1.200 0h12.600Q15 0 15 1.200v15.600Q15 18 13.800 18H1.200Q0 18 0 16.800V1.200Q0 0 1.200 0zM1.200 1.300v15.400h12.600V1.300zM7.500 3.600a2.600 2.600 0 1 1 0 5.200 2.600 2.600 0 0 1 0-5.200zM3.300 14.300V11.200Q3.300 8.500 6 8.500h3q2.700 0 2.700 2.700v3.100zM15 3.300h1.200q.8 0 .8.800v.9q0 .8-.8.800H15zM15 7.400h1.200q.8 0 .8.800v.9q0 .8-.8.800H15zM15 11.400h1.200q.8 0 .8.800v.9q0 .8-.8.800H15z" fill="#3a3a3a" fill-rule="evenodd"/></svg><div class="tt" style="left:29px;top:11px">Заказчик</div>
<svg class="ic" style="left:751px;top:16px" width="11" height="11" viewBox="0 0 11 11"><path d="M4 .5h3v3.500h3.500v2.800H7v3.700H4V6.800H.5V4H4z" fill="#6e6e6e"/></svg>
</div>
<div class="card" style="left:265px;top:870px;width:1579px;height:50px;background:#f8f9fb">
<svg class="ic" style="left:8px;top:16px" width="17" height="14" viewBox="0 0 17 14"><path d="M1.800 .6h4.400l1.300 1.800h7.700q1.200 0 1.200 1.200v8.600q0 1.200-1.200 1.200H1.800q-1.200 0-1.200-1.200V1.800Q.6 .6 1.800 .6z" fill="none" stroke="#777" stroke-width="1.200"/></svg>
<div class="tt" style="left:35px;top:12px;color:#888">Товары и услуги</div>
<svg class="ic" style="left:1555px;top:17px" width="11" height="11" viewBox="0 0 11 11"><path d="M4 .5h3v3.500h3.500v2.800H7v3.700H4V6.800H.5V4H4z" fill="#6e6e6e"/></svg>
</div>
<div class="card" style="left:265px;top:935px;width:1579px;height:50px;background:#f8f9fb">
<svg class="ic" style="left:8px;top:14px" width="13" height="12" viewBox="0 0 13 12"><path d="M0 0h13v2.500H0zM0 4.500h13v2H0z" fill="#6e7280"/></svg>
<div class="tt" style="left:30px;top:12px;color:#888">Действия</div>
<svg class="ic" style="left:1555px;top:13px" width="11" height="11" viewBox="0 0 11 11"><path d="M4 .5h3v3.500h3.500v2.800H7v3.700H4V6.800H.5V4H4z" fill="#6e6e6e"/></svg>
</div>
</div>

<svg class="abs" style="left:0;top:0;z-index:9;pointer-events:none" width="1920" height="953" viewBox="0 0 1920 953">
<g fill="#e3372e" stroke="none">
<path d="M618.700 330L507.500 232.300" stroke="#e3372e" stroke-width="4.200" stroke-linecap="round" fill="none"/>
<path d="M490.300 217.600L520 225.700 508 232.800 501.600 245.500z"/>
<path d="M1196 605L1063 703.300" stroke="#e3372e" stroke-width="4.200" stroke-linecap="round" fill="none"/>
<path d="M1045.100 715.900L1059.400 688.700 1062.600 702.300 1075.500 710.800z"/>
</g>
</svg>
</body>
</html>
